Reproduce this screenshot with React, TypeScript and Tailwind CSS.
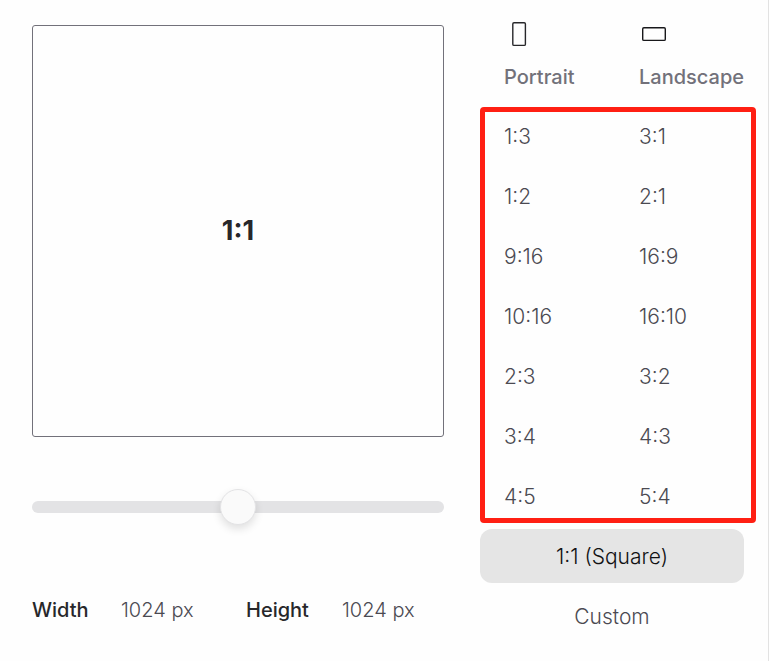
import { useState } from "react";
import clsx from "clsx";

const PORTRAIT = ["1:3", "1:2", "9:16", "10:16", "2:3", "3:4", "4:5"];
const LANDSCAPE = ["3:1", "2:1", "16:9", "16:10", "3:2", "4:3", "5:4"];

interface RatioButtonProps {
  label: string;
  active: boolean;
  centered?: boolean;
  onClick: () => void;
}

function RatioButton({ label, active, centered, onClick }: RatioButtonProps) {
  return (
    <button
      type="button"
      aria-pressed={active}
      onClick={onClick}
      className={clsx(
        "h-[54px] w-full rounded-xl px-6 pt-0.5 text-[21px] font-light",
        centered ? "text-center" : "text-left",
        active ? "bg-[#e5e5e5] text-[#111113]" : "text-[#4b4a52]"
      )}
    >
      {label}
    </button>
  );
}

export default function App() {
  const [ratio, setRatio] = useState("1:1");
  const [position, setPosition] = useState(50);

  return (
    <div className="flex min-h-screen gap-9 border-r border-[#e2e2e2] bg-[#fefefe] pl-8 pr-6 font-['Inter',sans-serif] text-[20px] leading-[30px] text-[#4b4a52]">
      {/* Preview, slider and output size */}
      <section className="flex min-w-0 flex-1 flex-col pt-[25px]">
        <div className="flex aspect-square w-full items-center justify-center rounded-[3px] border border-[#72717a] text-[27px] font-bold text-[#27272a]">
          {ratio}
        </div>

        <input
          type="range"
          aria-label="Aspect ratio"
          min={0}
          max={100}
          value={position}
          onChange={(e) => setPosition(Number(e.target.value))}
          className="mt-16 h-3 w-full cursor-pointer appearance-none rounded-full bg-[#e3e3e5] [&::-webkit-slider-thumb]:size-9 [&::-webkit-slider-thumb]:appearance-none [&::-webkit-slider-thumb]:rounded-full [&::-webkit-slider-thumb]:border [&::-webkit-slider-thumb]:border-[#e3e3e5] [&::-webkit-slider-thumb]:bg-[#fafafa] [&::-webkit-slider-thumb]:shadow-[0_4px_8px_rgba(0,0,0,0.12)]"
        />

        <dl className="mt-[82px] grid grid-cols-[89px_125px_96px_1fr] whitespace-nowrap">
          <dt className="font-medium text-[#27272a]">Width</dt>
          <dd className="font-light">1024 px</dd>
          <dt className="font-medium text-[#27272a]">Height</dt>
          <dd className="font-light">1024 px</dd>
        </dl>
      </section>

      {/* Ratio picker */}
      <section className="w-[264px] shrink-0 pt-[19px]">
        <div className="grid grid-cols-2 gap-x-[6px] font-medium text-[#72717a]">
          <div className="flex flex-col gap-[13px] pl-6">
            <svg width="30" height="30" viewBox="0 0 30 30" fill="none" stroke="#27272a" strokeWidth="1.4" aria-hidden="true">
              <rect x="8.8" y="3.8" width="12.6" height="22.6" rx="1.2" />
            </svg>
            <span>Portrait</span>
          </div>
          <div className="flex flex-col gap-[13px] pl-6">
            <svg width="30" height="30" viewBox="0 0 30 30" fill="none" stroke="#18181b" strokeWidth="1.4" aria-hidden="true">
              <rect x="3.7" y="8.8" width="22.6" height="12.6" rx="1.2" />
            </svg>
            <span>Landscape</span>
          </div>
        </div>

        <div className="relative mt-[17px] grid grid-cols-2 gap-[6px]">
          {PORTRAIT.map((label, i) => (
            <div key={label} className="contents">
              <RatioButton label={label} active={ratio === label} onClick={() => setRatio(label)} />
              <RatioButton
                label={LANDSCAPE[i]}
                active={ratio === LANDSCAPE[i]}
                onClick={() => setRatio(LANDSCAPE[i])}
              />
            </div>
          ))}
          {/* Highlight frame around the presets */}
          <div className="pointer-events-none absolute -right-3 -top-0.5 bottom-0 left-0 rounded-[4px] border-[5px] border-[#ff1f13]" />
        </div>

        <div className="mt-[6px] flex flex-col gap-[6px]">
          <RatioButton label="1:1 (Square)" centered active={ratio === "1:1"} onClick={() => setRatio("1:1")} />
          <RatioButton label="Custom" centered active={ratio === "Custom"} onClick={() => setRatio("Custom")} />
        </div>
      </section>
    </div>
  );
}
